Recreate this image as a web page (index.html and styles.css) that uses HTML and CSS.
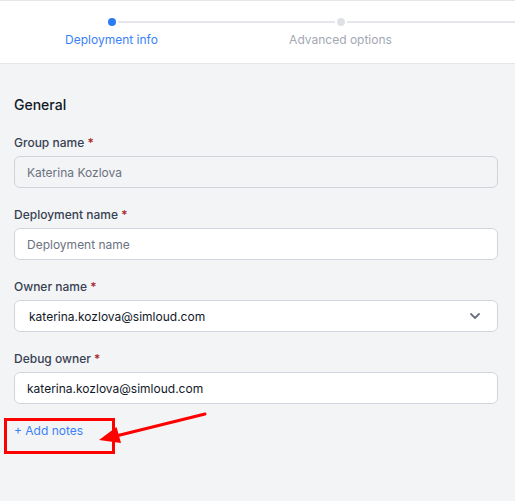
FILE: index.html
```html
<!DOCTYPE html>
<html lang="en">
<head>
<meta charset="utf-8">
<title>Deployment info</title>
<link rel="stylesheet" href="styles.css">
</head>
<body>
<header class="header">
  <div class="stepper">
    <div class="step step-active">
      <div class="track">
        <span class="line line-hidden"></span>
        <span class="dot"></span>
        <span class="line"></span>
      </div>
      <div class="step-label">Deployment info</div>
    </div>
    <div class="step">
      <div class="track">
        <span class="line"></span>
        <span class="dot"></span>
        <span class="line"></span>
      </div>
      <div class="step-label">Advanced options</div>
    </div>
    <div class="step">
      <div class="track">
        <span class="line"></span>
        <span class="dot"></span>
        <span class="line line-hidden"></span>
      </div>
      <div class="step-label"></div>
    </div>
  </div>
</header>

<main class="main">
  <h2 class="section-title">General</h2>

  <div class="field">
    <label class="label">Group name <span class="req">*</span></label>
    <div class="input input-disabled">Katerina Kozlova</div>
  </div>

  <div class="field">
    <label class="label">Deployment name <span class="req">*</span></label>
    <div class="input input-placeholder">Deployment name</div>
  </div>

  <div class="field">
    <label class="label">Owner name <span class="req">*</span></label>
    <div class="input input-select">
      <span class="select-value">katerina.kozlova@simloud.com</span>
      <svg class="chevron" width="10" height="6" viewBox="0 0 10 6"><path d="M1 1l4 4 4-4" fill="none" stroke="#6b7280" stroke-width="1.8" stroke-linecap="round" stroke-linejoin="round"/></svg>
    </div>
  </div>

  <div class="field">
    <label class="label">Debug owner <span class="req">*</span></label>
    <div class="input">katerina.kozlova@simloud.com</div>
  </div>

  <a class="add-notes">+ Add notes</a>
</main>

<svg class="annotation" width="515" height="501" viewBox="0 0 515 501">
  <rect x="5.5" y="419.5" width="108" height="33" fill="none" stroke="#ff0000" stroke-width="3"/>
  <line x1="205" y1="414" x2="116" y2="436" stroke="#ff0000" stroke-width="3" stroke-linecap="round"/>
  <polygon points="99,440 116.5,427 121,443" fill="#ff0000"/>
</svg>
</body>
</html>
```

FILE: styles.css
```css
* { box-sizing: border-box; }

html, body {
  margin: 0;
  padding: 0;
}

body {
  position: relative;
  width: 515px;
  height: 501px;
  overflow: hidden;
  background: #f3f4f6;
  font-family: Inter, "Noto Sans", "Liberation Sans", sans-serif;
  color: #111827;
}

.header {
  background: #ffffff;
  border-top: 1px solid #e5e7eb;
  border-bottom: 1px solid #e5e7eb;
  padding: 17px 0 15px;
  overflow: hidden;
}

.stepper {
  display: flex;
  margin-left: -3px;
  width: 700px;
}

.step {
  flex: 0 0 229px;
  display: flex;
  flex-direction: column;
  align-items: stretch;
}

.track {
  display: flex;
  align-items: center;
  height: 8px;
}

.line {
  flex: 1;
  height: 2px;
  background: #e5e7eb;
}

.line-hidden { background: transparent; }

.dot {
  width: 8px;
  height: 8px;
  border-radius: 50%;
  background: #dfe1e6;
  margin: 0 2px;
}

.step-active .dot { background: #2b7bf2; }

.step-label {
  margin-top: 6px;
  height: 16px;
  text-align: center;
  font-size: 12px;
  line-height: 16px;
  color: #a3a8b3;
}

.step-active .step-label { color: #3b82f6; }

.main {
  padding: 31px 17px 0 14px;
}

.section-title {
  margin: 0 0 20px;
  font-size: 14px;
  line-height: 20px;
  font-weight: 500;
  color: #111827;
}

.field {
  display: flex;
  flex-direction: column;
  margin-bottom: 19px;
}

.label {
  font-size: 12px;
  line-height: 16px;
  font-weight: 500;
  color: #374151;
  margin-bottom: 5px;
}

.req { color: #a31d24; }

.input {
  height: 32px;
  display: flex;
  align-items: center;
  padding: 0 12px;
  background: #ffffff;
  border: 1px solid #d1d5db;
  border-radius: 6px;
  font-size: 12px;
  color: #111827;
}

.input-disabled {
  background: #f3f4f6;
  color: #6b7280;
}

.input-placeholder { color: #6b7280; }

.input-select {
  justify-content: space-between;
  padding: 0 17px 0 14px;
}

.chevron { display: block; }

.add-notes {
  display: block;
  font-size: 12px;
  line-height: 16px;
  color: #3b82f6;
  cursor: pointer;
}

.annotation {
  position: absolute;
  left: 0;
  top: 0;
  pointer-events: none;
}
```
